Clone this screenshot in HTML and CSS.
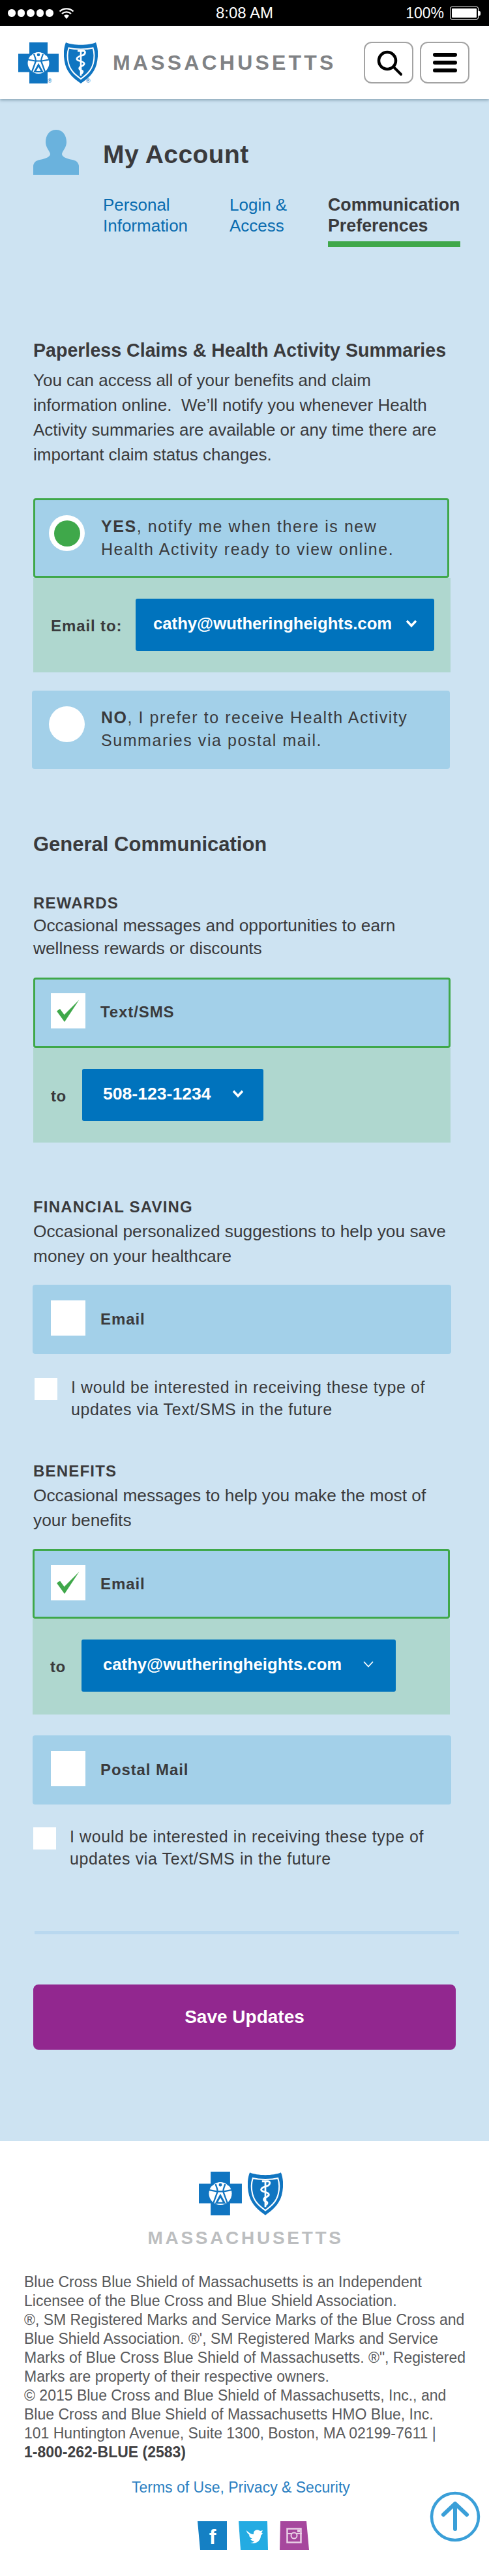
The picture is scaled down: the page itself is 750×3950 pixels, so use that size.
FILE: index.html
```html
<!DOCTYPE html>
<html lang="en">
<head>
<meta charset="utf-8">
<title>My Account - Communication Preferences</title>
<link rel="stylesheet" href="styles.css">
</head>
<body>
<svg class="defs" width="0" height="0" aria-hidden="true">
  <symbol id="cross" viewBox="0 0 62 63">
    <path d="M17 0H45V17.5H62V45.500H45V63H17V45.500H0V17.500H17Z" fill="#1075c1"/>
    <circle cx="31" cy="31.500" r="16.500" fill="#fff"/>
    <g fill="none" stroke="#1075c1" stroke-width="2.200">
      <path d="M15 26.500L26 28.500H36L47 26.500"/>
      <path d="M24 18C25 21 26.500 23 27 28.500L21 45M38 18C37 21 35.500 23 35 28.500L41 45"/>
      <path d="M31 34L25 45H37Z" fill="#1075c1"/>
      <path d="M19 20A15 15 0 0 1 43 20" stroke-width="1.400"/>
    </g>
    <circle cx="31" cy="19" r="2.300" fill="#1075c1"/>
    <path d="M31 37.500L27.500 44H34.500Z" fill="#fff"/>
  </symbol>
  <symbol id="shield" viewBox="0 0 52 63">
    <path d="M3 0C14 5 38 5 49 0C53 10 53 22 50 34C46 48 36 56 26 63C16 56 6 48 2 34C-1 22-1 10 3 0Z" fill="#1075c1"/>
    <path d="M7.500 8.500C17 11 35 11 44.500 8.500C47 16 47 24 45 32C42 44 34 50 26 56C18 50 10 44 7 32C5 24 5 16 7.500 8.500Z" fill="#1075c1" stroke="#fff" stroke-width="2"/>
    <path d="M26 13V51" stroke="#fff" stroke-width="2.600" fill="none"/>
    <path d="M21 13H30C34 13 33 19 28 20C20 22 17 26 23 28C31 30 34 33 28 36C23 38 22 41 27 43C30 44 29 47 26 48" stroke="#fff" stroke-width="2.800" fill="none"/>
  </symbol>
</svg>

<div class="statusbar">
  <div class="status-left">
    <span class="dot"></span><span class="dot"></span><span class="dot"></span><span class="dot"></span><span class="dot"></span>
    <svg class="wifi" viewBox="0 0 24 18" width="24" height="18"><path d="M1.500 6.500C7.500 1 16.500 1 22.500 6.500M5 10C9 6.500 15 6.500 19 10" fill="none" stroke="#fff" stroke-width="2.300"/><path d="M8 13C10 11 14 11 16 13L12 18Z" fill="#fff"/></svg>
  </div>
  <div class="status-time">8:08 AM</div>
  <div class="status-right">
    <span>100%</span>
    <span class="battery"><span class="battery-fill"></span></span>
    <span class="battery-nub"></span>
  </div>
</div>

<header class="topbar">
  <svg class="logo-cross" width="62" height="63"><use href="#cross"/></svg>
  <svg class="logo-shield" width="52" height="63"><use href="#shield"/></svg>
  <span class="reg reg-a">®</span>
  <span class="reg reg-b">®</span>
  <div class="wordmark">MASSACHUSETTS</div>
  <div class="top-actions">
    <button class="icon-btn" aria-label="Search">
      <svg width="44" height="44" viewBox="0 0 44 44"><circle cx="20" cy="19" r="13" fill="none" stroke="#000" stroke-width="4.500"/><path d="M30 29L41 40" stroke="#000" stroke-width="4" stroke-linecap="round"/></svg>
    </button>
    <button class="icon-btn" aria-label="Menu">
      <span class="burger"><span></span><span></span><span></span></span>
    </button>
  </div>
</header>

<main class="page">
  <section class="account">
    <div class="account-head">
      <svg width="70" height="69" viewBox="0 0 70 69"><path d="M35 0C45 0 51 8 51 19C51 27 45 32 44 37C44 41 49 44 60 46C66 47 69 50 70 55V69H0V55C1 50 4 47 10 46C21 44 26 41 26 37C25 32 19 27 19 19C19 8 25 0 35 0Z" fill="#6ab2dd"/></svg>
      <h1 class="account-title">My Account</h1>
    </div>
    <nav class="tabs">
      <a class="tab tab-personal">Personal<br>Information</a>
      <a class="tab tab-login">Login &amp;<br>Access</a>
      <a class="tab tab-active">Communication<br>Preferences</a>
    </nav>
  </section>

  <section class="content">
    <h2 class="h-paperless">Paperless Claims &amp; Health Activity Summaries</h2>
    <p class="lead">You can access all of your benefits and claim information online.&nbsp; We’ll notify you whenever Health Activity summaries are available or any time there are important claim status changes.</p>

    <div class="option option-on option-yes">
      <span class="radio"><span class="radio-dot"></span></span>
      <span class="option-text"><b>YES</b>, notify me when there is new<br>Health Activity ready to view online.</span>
    </div>
    <div class="panel panel-yes">
      <span class="panel-label label-email">Email to:</span>
      <div class="select select-yes">cathy@wutheringheights.com
        <svg class="chev" width="18" height="12" viewBox="0 0 18 12"><path d="M2 2L9 9.500L16 2" fill="none" stroke="#fff" stroke-width="3.500"/></svg>
      </div>
    </div>

    <div class="option option-no">
      <span class="radio"></span>
      <span class="option-text"><b>NO</b>, I prefer to receive Health Activity<br>Summaries via postal mail.</span>
    </div>

    <h2 class="h-general">General Communication</h2>

    <h3 class="cat cat-rewards">REWARDS</h3>
    <p class="desc desc-tight">Occasional messages and opportunities to earn wellness rewards or discounts</p>
    <div class="check-row check-on check-rewards">
      <span class="box"><svg width="53" height="55" viewBox="0 0 53 55"><path d="M9 27.500L14 24L20.500 33L43.500 10L21 44Z" fill="#3fa84a"/></svg></span>
      <span class="check-label">Text/SMS</span>
    </div>
    <div class="panel panel-rewards">
      <span class="panel-label label-to">to</span>
      <div class="select select-phone">508-123-1234
        <svg class="chev" width="18" height="12" viewBox="0 0 18 12"><path d="M2 2L9 9.500L16 2" fill="none" stroke="#fff" stroke-width="3.500"/></svg>
      </div>
    </div>

    <h3 class="cat cat-financial">FINANCIAL SAVING</h3>
    <p class="desc desc-loose">Occasional personalized suggestions to help you save money on your healthcare</p>
    <div class="check-row check-wide check-financial">
      <span class="box"></span>
      <span class="check-label">Email</span>
    </div>
    <div class="future future-a">
      <span class="box-small"></span>
      <span class="future-text">I would be interested in receiving these type of<br>updates via Text/SMS in the future</span>
    </div>

    <h3 class="cat cat-benefits">BENEFITS</h3>
    <p class="desc desc-loose">Occasional messages to help you make the most of your benefits</p>
    <div class="check-row check-on check-benefits">
      <span class="box"><svg width="53" height="55" viewBox="0 0 53 55"><path d="M9 27.500L14 24L20.500 33L43.500 10L21 44Z" fill="#3fa84a"/></svg></span>
      <span class="check-label">Email</span>
    </div>
    <div class="panel panel-benefits">
      <span class="panel-label label-to">to</span>
      <div class="select select-benefits">cathy@wutheringheights.com
        <svg class="chev" width="18" height="12" viewBox="0 0 18 12"><path d="M2 2L9 9.500L16 2" fill="none" stroke="#fff" stroke-width="1.800"/></svg>
      </div>
    </div>
    <div class="check-row check-wide check-postal">
      <span class="box"></span>
      <span class="check-label">Postal Mail</span>
    </div>
    <div class="future future-b">
      <span class="box-small"></span>
      <span class="future-text">I would be interested in receiving these type of<br>updates via Text/SMS in the future</span>
    </div>

    <hr class="divider">
    <button class="save">Save Updates</button>
  </section>
</main>

<footer class="footer">
  <div class="footer-logo">
    <svg width="66" height="67"><use href="#cross"/></svg>
    <svg width="54" height="68"><use href="#shield"/></svg>
  </div>
  <div class="footer-wordmark">MASSACHUSETTS</div>
  <p class="legal">Blue Cross Blue Shield of Massachusetts is an Independent<br>
  Licensee of the Blue Cross and Blue Shield Association.<br>
  ®, SM Registered Marks and Service Marks of the Blue Cross and<br>
  Blue Shield Association. ®', SM Registered Marks and Service<br>
  Marks of Blue Cross Blue Shield of Massachusetts. ®", Registered<br>
  Marks are property of their respective owners.<br>
  © 2015 Blue Cross and Blue Shield of Massachusetts, Inc., and<br>
  Blue Cross and Blue Shield of Massachusetts HMO Blue, Inc.<br>
  101 Huntington Avenue, Suite 1300, Boston, MA 02199-7611 |<br>
  <b>1-800-262-BLUE (2583)</b></p>
  <a class="terms">Terms of Use, Privacy &amp; Security</a>
  <div class="social">
    <svg width="45" height="45" viewBox="0 0 45 45"><path d="M0 0H45V37L45 44H4Z" fill="#1580c4"/><text x="23" y="35" class="glyph-f">f</text></svg>
    <svg width="45" height="45" viewBox="0 0 45 45"><path d="M0 0H44L45 44H3Z" fill="#24abe2"/><path d="M12 14C17 19 20 20 23 20C22 14 29 11 33 15L37 14L35 18L37 18C36 20 35 21 34 22C34 30 27 36 18 33C21 33 23 32 24 31C20 30 19 29 18 27L21 27C17 25 16 23 16 21L18 22C14 19 12 17 12 14Z" fill="#fff"/></svg>
    <svg width="45" height="45" viewBox="0 0 45 45"><path d="M1 0H41L45 44H0Z" fill="#a6479d"/><rect x="11.500" y="11.500" width="21" height="21" fill="none" stroke="#e8cfe5" stroke-width="2.500"/><path d="M11 19H34" stroke="#e8cfe5" stroke-width="2"/><circle cx="22" cy="22" r="4.500" fill="#a6479d" stroke="#e8cfe5" stroke-width="2"/><rect x="27" y="13" width="4" height="4" fill="#e8cfe5"/></svg>
  </div>
  <a class="to-top" aria-label="Back to top">
    <svg width="78" height="78" viewBox="0 0 78 78"><circle cx="39" cy="39" r="36" fill="none" stroke="#3a9fd8" stroke-width="4.500"/><path d="M39 58V21M21 36L39 19L57 36" fill="none" stroke="#3a9fd8" stroke-width="6" stroke-linecap="round" stroke-linejoin="round"/></svg>
  </a>
</footer>
</body>
</html>
```
FILE: styles.css
```css
* { box-sizing: border-box; }
html, body { margin: 0; padding: 0; }
body { font-family: "Liberation Sans", Arial, sans-serif; color: #3a3a3c; background: #fff; width: 750px; }
h1, h2, h3, p { margin: 0; }
.defs { position: absolute; }

/* status bar */
.statusbar { height: 40px; background: #000; color: #fff; display: grid; grid-template-columns: 1fr auto 1fr; align-items: center; font-size: 24px; }
.status-left { display: flex; align-items: center; padding-left: 12px; gap: 3px; }
.dot { width: 11.500px; height: 11.500px; border-radius: 50%; background: #fff; }
.wifi { margin-left: 5px; margin-top: 0; }
.status-time { text-align: center; }
.status-right { display: flex; align-items: center; justify-content: flex-end; padding-right: 13px; font-size: 23px; }
.battery { width: 44px; height: 20px; border: 1.500px solid #fff; border-radius: 3px; padding: 2px; margin-left: 9px; }
.battery-fill { display: block; height: 100%; background: #fff; border-radius: 1px; }
.battery-nub { width: 3px; height: 7px; background: #fff; border-radius: 0 2px 2px 0; }

/* top bar */
.topbar { position: relative; height: 112px; background: #fff; display: flex; align-items: center; padding: 0 30px 0 28px; box-shadow: 0 2px 4px rgba(90,120,140,.55); z-index: 1; }
.logo-cross { flex: none; }
.logo-shield { flex: none; margin-left: 8px; }
.reg { position: absolute; font-size: 9px; color: #1075c1; line-height: 10px; }
.reg-a { left: 73px; top: 79px; }
.reg-b { left: 132px; top: 79px; }
.wordmark { margin-left: 23px; font-weight: 700; font-size: 32px; letter-spacing: 4.200px; color: #808285; line-height: 40px; white-space: nowrap; }
.top-actions { margin-left: auto; display: flex; gap: 10px; }
.icon-btn { width: 76px; height: 64px; padding: 0; background: #fff; border: 2px solid #a3a3a3; border-radius: 12px; display: flex; align-items: center; justify-content: center; }
.burger { display: flex; flex-direction: column; gap: 6px; width: 37px; }
.burger span { height: 6px; border-radius: 3px; background: #000; }

/* page */
.page { background: #cde3f2; }
.account { padding: 47px 0 0 51px; }
.account-head { display: flex; align-items: center; gap: 37px; }
.account-title { font-size: 39px; font-weight: 700; letter-spacing: .4px; line-height: 46px; margin-top: 7px; }
.tabs { display: flex; margin: 30px 0 0 107px; font-size: 26px; line-height: 32px; }
.tab { color: #0a6cb0; display: block; }
.tab-personal { width: 194px; }
.tab-login { width: 151px; }
.tab-active { width: 203px; color: #3a3a3c; font-weight: 700; font-size: 26.800px; padding-bottom: 8px; border-bottom: 9px solid #3fa84a; }

.content { padding: 140px 0 140px 51px; }
.h-paperless { font-size: 28.600px; line-height: 36px; font-weight: 700; white-space: nowrap; }
.lead { margin-top: 9px; font-size: 26px; line-height: 38px; width: 640px; }

/* radio options */
.option { display: flex; align-items: flex-start; background: #a3d0e9; border-radius: 4px; font-size: 25px; letter-spacing: 1.550px; line-height: 35px; }
.option-on { border: 3px solid #3fa84a; }
.option-yes { width: 638px; height: 122px; margin-top: 48px; padding: 23px 0 0 21px; }
.option-no { width: 641px; height: 120.500px; margin: 27.500px 0 0 -2px; padding: 24px 0 0 26px; }
.radio { flex: none; width: 55px; height: 55px; border-radius: 50%; background: #fff; display: flex; align-items: center; justify-content: center; }
.radio-dot { width: 40px; height: 40px; border-radius: 50%; background: #3fa84a; }
.option-text { margin-left: 25px; white-space: nowrap; }

/* green panels */
.panel { width: 640px; background: #afd7cf; display: flex; align-items: flex-start; padding: 32px 0 0 27px; }
.panel-yes { height: 145px; }
.panel-rewards { height: 145px; }
.panel-benefits { height: 146.500px; margin-left: -1px; }
.panel-label { font-weight: 700; font-size: 24px; line-height: 80px; white-space: nowrap; margin-top: 2px; }
.label-email { letter-spacing: .9px; width: 130px; }
.label-to { width: 48px; letter-spacing: .5px; }
.select { height: 80px; background: #0073bd; color: #fff; font-weight: 700; border-radius: 3px; display: flex; align-items: center; justify-content: space-between; white-space: nowrap; padding-bottom: 4px; }
.select-yes { width: 458px; padding: 0 26px 4px 27px; font-size: 25.700px; }
.select-phone { width: 278px; padding: 0 30px 4px 32px; font-size: 26.600px; }
.select-benefits { width: 482px; padding: 0 33px 4px 33px; font-size: 25.700px; }
.chev { flex: none; }

/* headings */
.h-general { margin-top: 98px; font-size: 31px; line-height: 36px; font-weight: 700; }
.cat { font-size: 24px; line-height: 34px; letter-spacing: 1.200px; font-weight: 700; }
.cat-rewards { margin-top: 55px; }
.cat-financial { margin-top: 82px; }
.cat-benefits { margin-top: 61px; }
.desc { font-size: 26.300px; width: 640px; }
.desc-tight { line-height: 34.500px; }
.desc-loose { line-height: 38px; margin-top: 1px; }

/* checkbox rows */
.check-row { display: flex; align-items: flex-start; background: #a3d0e9; border-radius: 4px; }
.check-on { border: 3px solid #3fa84a; }
.box { flex: none; width: 53px; height: 54px; background: #fff; display: block; }
.box svg { display: block; }
.check-label { margin-left: 23px; font-size: 24px; font-weight: 700; letter-spacing: .9px; line-height: 54px; padding-top: 2px; }
.check-rewards { width: 640px; height: 108px; margin-top: 28px; padding: 21px 0 0 24px; }
.check-financial, .check-postal { width: 642px; height: 106px; margin-left: -1px; padding: 24px 0 0 28px; }
.check-financial { margin-top: 25px; }
.check-benefits { width: 640px; height: 107px; margin: 25px 0 0 -1px; padding: 22px 0 0 25px; }
.check-postal { margin-top: 32px; }

/* interest rows */
.future { display: flex; align-items: flex-start; font-size: 25px; letter-spacing: .6px; line-height: 34px; }
.future-a { margin: 34px 0 0 2px; }
.future-b { margin-top: 32px; }
.box-small { flex: none; width: 35px; height: 34px; background: #fff; margin-top: 3px; }
.future-text { margin-left: 21px; white-space: nowrap; }

.divider { width: 651px; height: 5px; margin: 94px 0 0 2px; border: 0; background: #b9d8ef; }
.save { display: block; width: 648px; height: 100px; margin-top: 77px; border: 0; border-radius: 8px; background: #92278f; color: #fff; font: 700 28px "Liberation Sans", Arial, sans-serif; }

/* footer */
.footer { position: relative; background: #fff; height: 667px; padding-top: 47px; display: flex; flex-direction: column; }
.footer-logo { display: flex; gap: 9px; padding-left: 305px; height: 68px; }
.footer-wordmark { margin: 19px 0 0 226.500px; font-weight: 700; font-size: 28px; letter-spacing: 3.700px; line-height: 30px; color: #bcbec0; white-space: nowrap; }
.legal { margin: 38.500px 0 0 37px; font-size: 23px; line-height: 29px; color: #58595b; white-space: nowrap; }
.legal b { color: #414042; }
.terms { margin: 25px 0 0 202px; font-size: 23px; line-height: 29px; color: #2b80c2; white-space: nowrap; }
.social { display: flex; gap: 18px; margin: 36.500px 0 0 303px; }
.glyph-f { font: 700 32px "Liberation Sans", Arial, sans-serif; fill: #fff; text-anchor: middle; }
.to-top { position: absolute; left: 659px; top: 537px; display: block; width: 78px; height: 78px; }
```
